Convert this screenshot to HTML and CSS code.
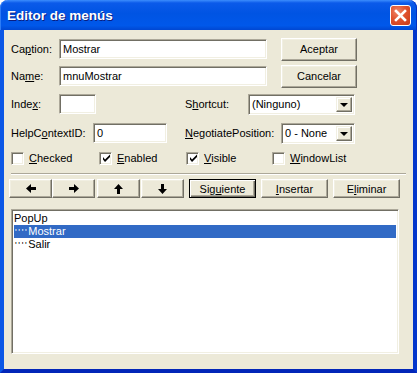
FILE: index.html
```html
<!DOCTYPE html>
<html lang="es">
<head>
    <meta charset="UTF-8">
    <title>Editor de menús</title>
    <link rel="stylesheet" href="styles.css">
</head>
<body>
    <div class="window">
        <div class="titlebar">
            <span class="title">Editor de menús</span>
            <span class="close">
                <svg width="13" height="13" viewBox="0 0 13 13"><path d="M2 2 L11 11 M11 2 L2 11" stroke="#fff" stroke-width="2.6" stroke-linecap="square"/></svg>
            </span>
        </div>
        <div class="client">
            <div class="row r1">
                <label class="lbl w48">Ca<u>p</u>tion:</label>
                <div class="field wide">Mostrar</div>
                <button class="btn push">Aceptar</button>
            </div>
            <div class="row r2">
                <label class="lbl w48">Na<u>m</u>e:</label>
                <div class="field wide">mnuMostrar</div>
                <button class="btn push">Cancelar</button>
            </div>
            <div class="row r3">
                <label class="lbl w48">Inde<u>x</u>:</label>
                <div class="field small"></div>
                <label class="lbl w63">S<u>h</u>ortcut:</label>
                <div class="field combo c107">(Ninguno)<span class="drop"><i></i></span></div>
            </div>
            <div class="row r4">
                <label class="lbl w82">HelpC<u>o</u>ntextID:</label>
                <div class="field mid">0</div>
                <label class="lbl w96"><u>N</u>egotiatePosition:</label>
                <div class="field combo c74">0 - None<span class="drop"><i></i></span></div>
            </div>
            <div class="row checks">
                <span class="check w88"><span class="box"></span><u>C</u>hecked</span>
                <span class="check w87"><span class="box on"><svg width="9" height="9" viewBox="0 0 9 9"><path d="M1 3 L3 5.5 L8 0.5 L8 3 L3 8 L1 5.5 Z" fill="#000"/></svg></span><u>E</u>nabled</span>
                <span class="check w86"><span class="box on"><svg width="9" height="9" viewBox="0 0 9 9"><path d="M1 3 L3 5.5 L8 0.5 L8 3 L3 8 L1 5.5 Z" fill="#000"/></svg></span><u>V</u>isible</span>
                <span class="check"><span class="box"></span><u>W</u>indowList</span>
            </div>
            <div class="sep"></div>
            <div class="row tools">
                <button class="btn arrow"><svg width="10" height="9" viewBox="0 0 10 9"><path d="M0 4.5 L5 0 L5 3 L10 3 L10 6 L5 6 L5 9 Z" fill="#000"/></svg></button>
                <button class="btn arrow"><svg width="10" height="9" viewBox="0 0 10 9"><path d="M10 4.5 L5 0 L5 3 L0 3 L0 6 L5 6 L5 9 Z" fill="#000"/></svg></button>
                <button class="btn arrow gap"><svg width="9" height="10" viewBox="0 0 9 10"><path d="M4.5 0 L9 5 L6 5 L6 10 L3 10 L3 5 L0 5 Z" fill="#000"/></svg></button>
                <button class="btn arrow"><svg width="9" height="10" viewBox="0 0 9 10"><path d="M4.5 10 L9 5 L6 5 L6 0 L3 0 L3 5 L0 5 Z" fill="#000"/></svg></button>
                <button class="btn act default">Sig<u>u</u>iente</button>
                <button class="btn act"><u>I</u>nsertar</button>
                <button class="btn act">E<u>l</u>iminar</button>
            </div>
            <div class="list">
                <div class="item">PopUp</div>
                <div class="item sel"><span class="dots">''''</span>Mostrar</div>
                <div class="item"><span class="dots">''''</span>Salir</div>
            </div>
        </div>
    </div>
</body>
</html>
```

FILE: styles.css
```css
body {
    margin: 0;
    background: #ffffff;
    font-family: "Liberation Sans", Arial, sans-serif;
    font-size: 11px;
    color: #000;
}
.window {
    width: 417px;
    height: 373px;
    display: flex;
    flex-direction: column;
}
.titlebar {
    height: 30px;
    border-radius: 8px 8px 0 0;
    background: linear-gradient(to bottom, #3c8dfd 0%, #0b5ae9 10%, #0054e3 45%, #0058ea 85%, #0047d2 100%);
    display: flex;
    align-items: center;
    justify-content: space-between;
    padding: 0 6px 0 7px;
    box-shadow: inset 1px 0 #2d7cf5, inset -1px 0 #0031c4;
}
.title {
    color: #fff;
    font-weight: bold;
    font-size: 13.5px;
    text-shadow: 1px 1px #0a1e80;
    margin-top: 1px;
}
.close {
    width: 21px;
    height: 21px;
    box-sizing: border-box;
    border: 1px solid #fff;
    border-radius: 3px;
    background: radial-gradient(circle at 35% 30%, #f0876a 0%, #e0532f 45%, #c93a17 100%);
    display: flex;
    align-items: center;
    justify-content: center;
    margin-top: 1px;
}
.close svg { display: block; }
.client {
    flex: 1;
    background: #ece9d8;
    border-left: 4px solid #0b57e6;
    border-right: 4px solid #0336cc;
    border-bottom: 4px solid #0226b8;
    padding: 9px 0 0 7px;
}
.row {
    display: flex;
    align-items: center;
}
.lbl { white-space: nowrap; }
.w48 { width: 48px; }
.w63 { width: 63px; }
.w82 { width: 82px; }
.w96 { width: 96px; }
.field {
    box-sizing: border-box;
    height: 20px;
    background: #fff;
    border: 1px solid;
    border-color: #aca899 #fff #fff #aca899;
    box-shadow: inset 1px 1px #716f64, inset -1px -1px #f1efe2;
    padding: 0 3px;
    display: flex;
    align-items: center;
    position: relative;
}
.wide { width: 208px; }
.small { width: 37px; margin-right: 89px; }
.mid { width: 74px; margin-right: 18px; }
.combo { height: 21px; padding-left: 3px; }
.c107 { width: 107px; }
.c74 { width: 74px; }
.drop {
    position: absolute;
    right: 2px;
    top: 2px;
    width: 16px;
    height: 15px;
    box-sizing: border-box;
    background: #ece9d8;
    border: 1px solid;
    border-color: #f1efe2 #716f64 #716f64 #f1efe2;
    box-shadow: inset -1px -1px #aca899, inset 1px 1px #fff;
    display: flex;
    align-items: center;
    justify-content: center;
}
.drop i {
    width: 0;
    height: 0;
    border-left: 4px solid transparent;
    border-right: 4px solid transparent;
    border-top: 4px solid #000;
    margin-top: 1px;
}
.btn {
    font: inherit;
    color: #000;
    box-sizing: border-box;
    background: #ece9d8;
    border: 1px solid;
    border-color: #fff #716f64 #716f64 #fff;
    box-shadow: inset -1px -1px #aca899, inset 1px 1px #f1efe2;
    padding: 0;
    display: flex;
    align-items: center;
    justify-content: center;
}
.push {
    width: 76px;
    height: 23px;
    margin-left: 14px;
}
.r1 { height: 20px; }
.r2 { height: 20px; margin-top: 7px; }
.r3 { height: 20px; margin-top: 8px; }
.r4 { height: 20px; margin-top: 9px; }
.checks { margin-top: 8px; height: 14px; }
.check {
    display: flex;
    align-items: center;
}
.w88 { width: 88px; }
.w87 { width: 87px; }
.w86 { width: 86px; }
.box {
    box-sizing: border-box;
    width: 13px;
    height: 13px;
    background: #fff;
    border: 1px solid;
    border-color: #aca899 #fff #fff #aca899;
    box-shadow: inset 1px 1px #716f64, inset -1px -1px #f1efe2;
    margin-right: 5px;
    display: flex;
    align-items: center;
    justify-content: center;
}
.box svg { display: block; margin: 1px 0 0 1px; }
.sep {
    margin: 8px 7px 0 0;
    height: 0;
    border-top: 1px solid #aca899;
    border-bottom: 1px solid #fff;
}
.tools {
    margin: 4px 0 0 -2px;
    height: 19px;
}
.arrow {
    width: 43px;
    height: 19px;
}
.gap { margin-left: 2px; }
.arrow:nth-child(4) { margin-left: 1px; }
.act {
    width: 67px;
    height: 19px;
    margin-left: 5px;
}
.default {
    border: 1px solid #000;
    box-shadow: inset 1px 1px #fff, inset -1px -1px #716f64, inset -2px -2px #aca899;
}
.list {
    box-sizing: border-box;
    width: 388px;
    height: 145px;
    margin-top: 11px;
    background: #fff;
    border: 1px solid;
    border-color: #aca899 #fff #fff #aca899;
    box-shadow: inset 1px 1px #716f64, inset -1px -1px #f1efe2;
    padding: 2px 2px;
}
.item {
    height: 13px;
    line-height: 13px;
    white-space: nowrap;
}
.dots {
    display: inline-block;
    font-size: 9px;
    letter-spacing: 1.6px;
    margin-left: 1px;
}
.sel {
    background: #316ac5;
    color: #fff;
}
```
